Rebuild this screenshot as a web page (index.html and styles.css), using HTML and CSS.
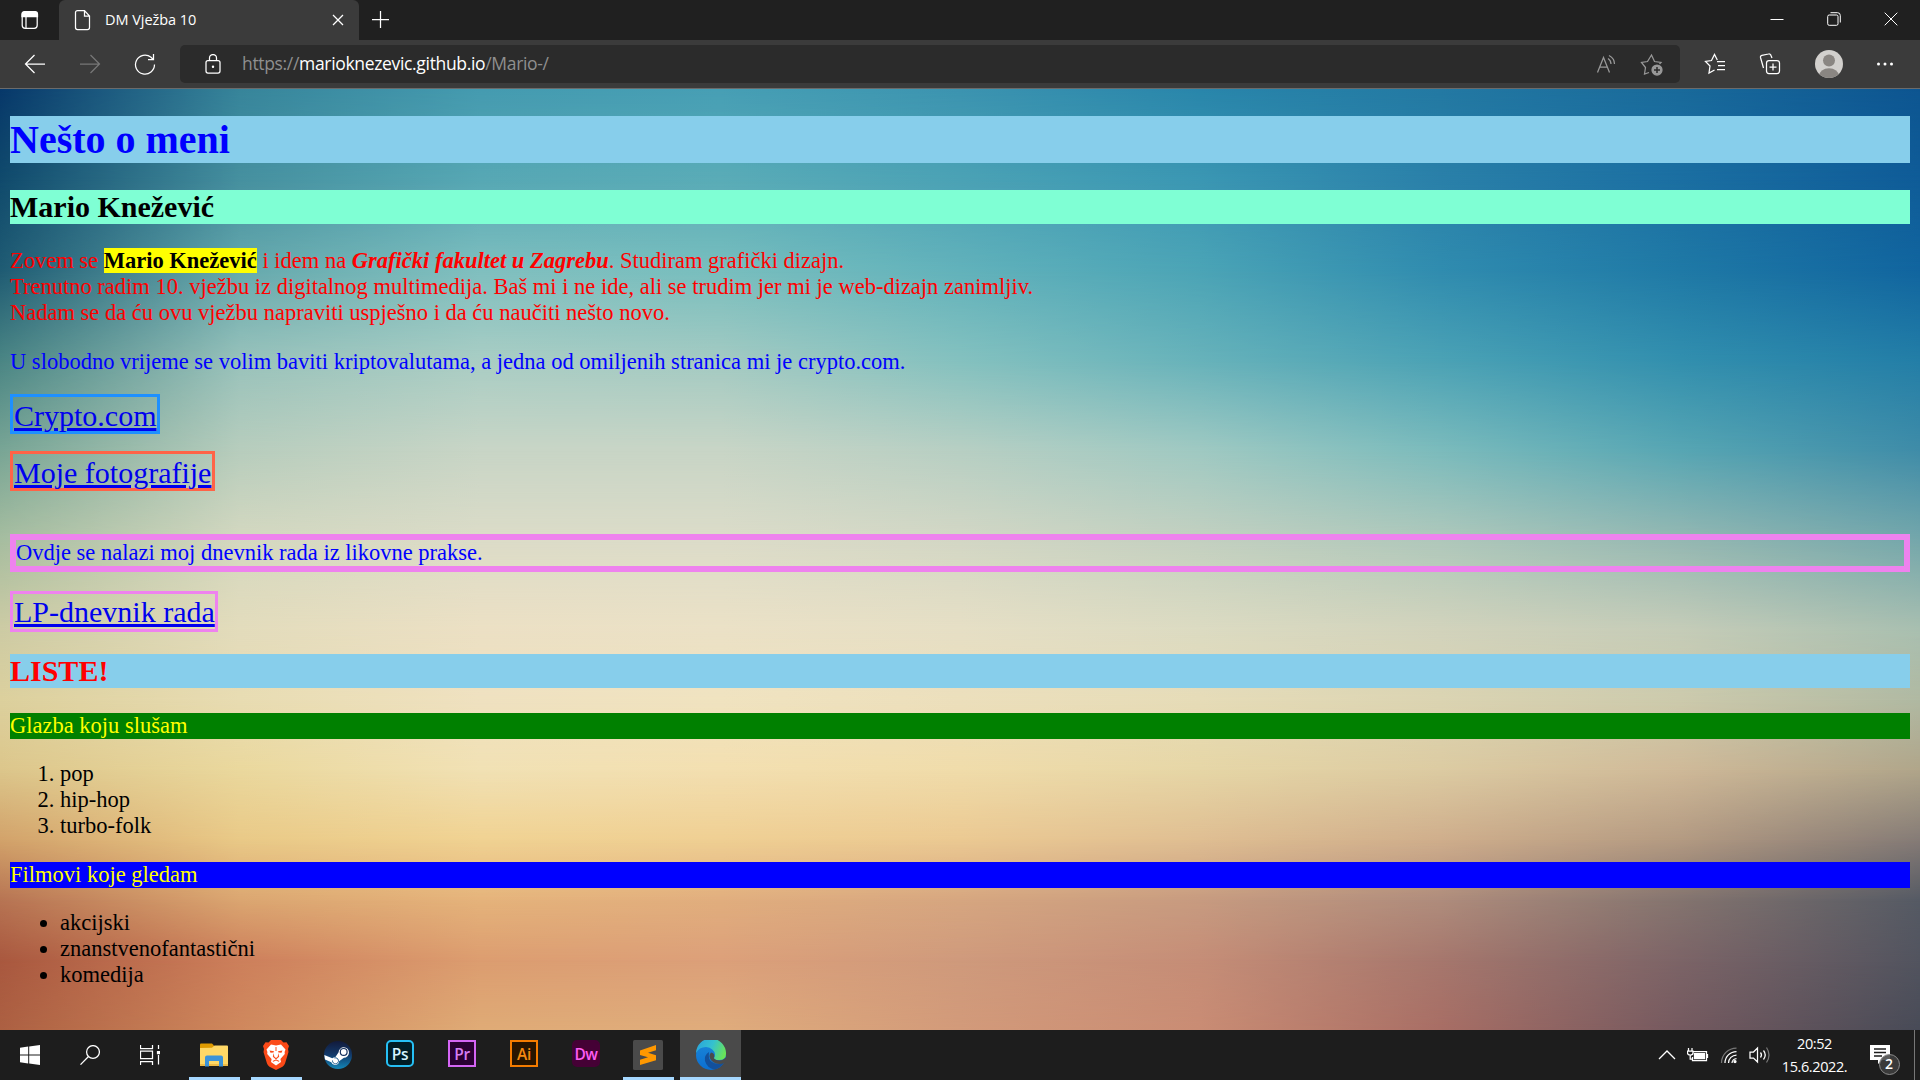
FILE: index.html
```html
<!DOCTYPE html>
<html lang="hr">
<head>
<meta charset="utf-8">
<title>DM Vježba 10</title>
<link rel="stylesheet" href="styles.css">
</head>
<body>
<header class="tabs">
  <div class="tab-actions"><svg class="ico" width="20" height="20" viewBox="0 0 20 20"><rect x="2.200" y="2" width="15" height="16.300" rx="3"/><path class="solid" d="M2 6.500V4a2.500 2.500 0 0 1 2.500-2.500h10.500A2.500 2.500 0 0 1 17.500 4v2.500z"/><path d="M6 6v12"/></svg></div>
  <div class="tab">
    <svg class="ico" width="18" height="22" viewBox="0 0 18 22"><path d="M3.500 1.500h7l5 5.500v11.500a2 2 0 0 1-2 2h-10a2 2 0 0 1-2-2v-15a2 2 0 0 1 2-2zM10.500 1.500V7h5"/></svg>
    <span class="tab-title">DM Vježba 10</span>
    <svg class="ico" width="12" height="12" viewBox="0 0 12 12"><path d="M1 1l10 10M11 1L1 11"/></svg>
  </div>
  <div class="new-tab"><svg class="ico" width="18" height="18" viewBox="0 0 18 18"><path d="M8.500 0v17M0 8.500h17"/></svg></div>
  <div class="window-controls">
    <svg class="ico thin" width="14" height="14" viewBox="0 0 14 14"><path d="M.5 7.500h13"/></svg>
    <svg class="ico thin" width="14" height="14" viewBox="0 0 14 14"><rect x=".7" y="3" width="10.300" height="10.300" rx="1.500"/><path d="M3.500.7h7a2.800 2.800 0 0 1 2.800 2.800v7"/></svg>
    <svg class="ico thin" width="14" height="14" viewBox="0 0 14 14"><path d="M.7.7l12.600 12.600M13.300.7L.7 13.300"/></svg>
  </div>
</header>
<nav class="toolbar">
  <div class="nav-buttons">
    <svg class="ico" width="22" height="20" viewBox="0 0 22 20"><path d="M10.500 1L1.500 10l9 9M1.500 10H21"/></svg>
    <svg class="ico dim" width="22" height="20" viewBox="0 0 22 20"><path d="M11.500 1l9 9-9 9M20.500 10H1"/></svg>
    <svg class="ico" width="22" height="22" viewBox="0 0 22 22"><path d="M20.500 11.500A9.500 9.500 0 1 1 17 4.200l2 2M19.500 1v5.500H14"/></svg>
  </div>
  <div class="address">
    <svg class="ico" width="16" height="20" viewBox="0 0 16 20"><rect x="1" y="6.500" width="14" height="12.500" rx="2"/><path d="M4.500 6.500V4a3.500 3.500 0 0 1 7 0v2.500"/><circle class="solid" cx="8" cy="12.700" r=".6"/></svg>
    <span class="url">https://<b>marioknezevic.github.io</b>/Mario-/</span>
    <svg class="ico grey" width="20" height="20" viewBox="0 0 20 20"><path d="M1.500 18.500l6-15 6 15M3.700 13h7.600M12 4.500c2 1.300 3 3 3 5.500M13 1.500c3.300 1.700 5.500 4.500 5.500 8.500"/></svg>
    <svg class="ico grey" width="24" height="24" viewBox="0 0 24 24"><path d="M9 20.500l-4.500 1.500 1-6.500L1.500 10.500l6-1L11.500 3l3 6.500 6.500 1-1.500 1.500"/><circle class="solid" cx="17" cy="18" r="5"/><path class="cut" d="M17 15v6M14 18h6"/></svg>
  </div>
  <div class="tools">
    <svg class="ico" width="22" height="22" viewBox="0 0 22 22"><path d="M10.500 17l-5.500 3 1-7L1.500 8.500l6-1 3-6 2.800 5.500M13 8.500h8M14 12.500h7M13 16.500h8"/></svg>
    <svg class="ico" width="22" height="22" viewBox="0 0 22 22"><path d="M4.500 15l-3-10.500a1.800 1.800 0 0 1 1.300-2.200L9.500 1a2 2 0 0 1 2.500 1.500L13 5"/><rect x="7.500" y="7.500" width="13" height="13" rx="2.500"/><path d="M14 10.500v7M10.500 14h7"/></svg>
    <svg width="28" height="28" viewBox="0 0 28 28"><defs><clipPath id="face"><circle cx="14" cy="14" r="14"/></clipPath></defs><g clip-path="url(#face)"><path fill="#d2d0cd" d="M0 0h28v28H0z"/><circle cx="14" cy="10.500" r="6" fill="#8a8682"/><ellipse cx="14" cy="26" rx="10" ry="7.800" fill="#8a8682"/></g></svg>
    <svg width="18" height="6" viewBox="0 0 18 6" fill="#fff"><circle cx="2.500" cy="3" r="1.500"/><circle cx="9" cy="3" r="1.500"/><circle cx="15.500" cy="3" r="1.500"/></svg>
  </div>
</nav>

<div class="viewport">
  <div class="sky s0"></div><div class="sky s1"></div><div class="sky s2"></div><div class="sky s3"></div><div class="sky s4"></div><div class="sky s5"></div><div class="sky s6"></div><div class="sky s7"></div><div class="sky s8"></div><div class="sky s9"></div><div class="sky s10"></div><div class="sky s11"></div><div class="sky s12"></div>
  <main class="page">
    <h1>Nešto o meni</h1>
    <h2 class="name">Mario Knežević</h2>
    <p class="intro">Zovem se <mark>Mario Knežević</mark> i idem na <strong><em>Grafički fakultet u Zagrebu</em></strong>. Studiram grafički dizajn.<br>Trenutno radim 10. vježbu iz digitalnog multimedija. Baš mi i ne ide, ali se trudim jer mi je web-dizajn zanimljiv.<br>Nadam se da ću ovu vježbu napraviti uspješno i da ću naučiti nešto novo.</p>
    <p class="hobby">U slobodno vrijeme se volim baviti kriptovalutama, a jedna od omiljenih stranica mi je crypto.com.</p>
    <a class="link crypto" href="#">Crypto.com</a>
    <a class="link photos" href="#">Moje fotografije</a>
    <p class="diary">Ovdje se nalazi moj dnevnik rada iz likovne prakse.</p>
    <a class="link lp" href="#">LP-dnevnik rada</a>
    <h2 class="lists">LISTE!</h2>
    <p class="music">Glazba koju slušam</p>
    <ol><li>pop</li><li>hip-hop</li><li>turbo-folk</li></ol>
    <p class="films">Filmovi koje gledam</p>
    <ul><li>akcijski</li><li>znanstvenofantastični</li><li>komedija</li></ul>
  </main>
</div>

<footer class="taskbar">
  <div class="sys"><svg width="20" height="20" viewBox="0 0 20 20" fill="#fff"><path d="M0 2.800l8.200-1.200v7.900H0zM9.200 1.400L20 0v9.500H9.200zM0 10.500h8.200v7.900L0 17.200zM9.200 10.500H20V20L9.200 18.600z"/></svg></div>
  <div class="sys"><svg class="ico" width="20" height="20" viewBox="0 0 20 20"><circle cx="13" cy="7" r="6.400"/><path d="M8.500 11.500L.5 19.600"/></svg></div>
  <div class="sys"><svg class="ico" width="20" height="20" viewBox="0 0 20 20"><path d="M.5 0v3.500h12V0M.5 20v-3.500h12V20M.5 6h12v7.500H.5zM18.500 0v4M18.500 10v9.500"/><path class="solid" d="M17.500 6.500h2v2h-2z"/></svg></div>
  <div class="apps">
    <div class="app open"><svg width="28" height="24" viewBox="0 0 28 24"><path fill="#e09b00" d="M0 1.500Q0 .5 1 .5h11l2 2v4H0z"/><path fill="#ffd866" d="M0 5l12-.3 2.500-2.200H27q1 0 1 1V23H0z"/><path fill="#efbb45" d="M0 21h28v2H0z"/><path fill="#3c93d8" d="M5 23.500v-9a2 2 0 0 1 2-2h14a2 2 0 0 1 2 2v9h-4v-5.500H9v5.500z"/></svg></div>
    <div class="app open"><svg width="26" height="30" viewBox="0 0 26 30"><path fill="#fb4a18" d="M13 0h5l2.500 2.500 3-.3L26 6l-1 3 .5 3-3.500 11.500q-.7 2-2.500 3.200L13 30l-6.500-3.300Q4.700 25.500 4 23.500L.5 12 1 9 0 6l2.500-3.800 3 .3L8 0z"/><path fill="#fff" d="M8 4.500l5 1 5-1 4.500 5-.9 2.500.2 2-4.400 5 .6 3L13 25.500 8 22l.6-3-4.400-5 .2-2-.9-2.500z"/><path fill="#fb4a18" d="M6.500 10.500l4.500.8-.5 1.200-3 .3zM19.500 10.500l-4.500.8.500 1.200 3 .3zM10.800 13l.4 3.500L13 18l1.800-1.500.4-3.500 1 3.800L13 19.500l-3.200-2.700zM9.500 21l3.500-1.500 3.500 1.500-.8.800-2.700-1.200-2.700 1.200zM12.500 7h1v4h-1z"/></svg></div>
    <div class="app"><svg width="28" height="28" viewBox="0 0 28 28"><defs><linearGradient id="st" x2="0" y2="1"><stop stop-color="#121a3a"/><stop offset=".5" stop-color="#123a6b"/><stop offset="1" stop-color="#1387b8"/></linearGradient></defs><circle cx="14" cy="14" r="14" fill="url(#st)"/><path fill="#fff" d="M.3 14l8 3.200q1.500-1 3-.9l3.300-5a5.200 5.200 0 1 1 5.300 5.400l-4.800 3.500a4 4 0 0 1-7.800 1L1 18.400z"/><circle cx="19.700" cy="10.900" r="3.400" fill="none" stroke="#16315e" stroke-width="1.200"/><path d="M8.500 19.500a3 3 0 1 0 2-2.500" fill="none" stroke="#1a5a8e"/></svg></div>
    <div class="app"><span class="adobe ps">Ps</span></div>
    <div class="app"><span class="adobe pr">Pr</span></div>
    <div class="app"><span class="adobe ai">Ai</span></div>
    <div class="app"><span class="adobe dw">Dw</span></div>
    <div class="app open"><svg width="30" height="30" viewBox="0 0 30 30"><rect width="30" height="30" rx="1.500" fill="#4a4a4a"/><path fill="#ff9800" d="M7 10.500L23 5v5.200l-8 2.600 8 2.400v5L7 25v-5.200l8-2.600-8-2.200z"/></svg></div>
    <div class="app open active"><svg width="30" height="30" viewBox="0 0 30 30"><defs><linearGradient id="e1" x1="0" y1=".3" x2="1" y2=".6"><stop stop-color="#2aa5dc"/><stop offset=".5" stop-color="#35c1cf"/><stop offset="1" stop-color="#6be454"/></linearGradient><linearGradient id="e2" x2="0" y2="1"><stop stop-color="#1b87d9"/><stop offset="1" stop-color="#0b6fd0"/></linearGradient></defs><circle cx="15" cy="15" r="15" fill="url(#e2)"/><path fill="url(#e1)" d="M0 13A15 15 0 0 1 30 14q0 6-7 6-5 0-5-2 1-1.500 1-3.500Q18 8 10 7 3 7 0 13z"/><path fill="#12509c" d="M13 12q-5 3-4 9 2 7 9.500 8.600Q25 28 28.300 22q-4 2.500-9 1.500-6.500-2-6.500-7.500 0-2.500.2-4z"/><path fill="#4a4a4a" d="M15 12.500q3.500.5 3.300 4-.8 1.500-.3 2 1.500 2 5.500 2 3.500 0 6.500-3v5l-2 .5q-3.500 1.500-8 .5-5.500-2-6.500-7 0-2.500 1.500-4z"/></svg></div>
  </div>
  <div class="tray">
    <svg class="ico" width="18" height="10" viewBox="0 0 18 10"><path d="M1 9l8-8 8 8"/></svg>
    <svg class="ico" width="22" height="16" viewBox="0 0 22 16"><path d="M6 4.500h13.500v9h-14V10M20.500 7v4M1.500 1v3M5 1v3M.5 4h5.500v2q0 2-2.700 2Q.5 8 .5 6zM3.200 8v4H5"/><path class="solid" d="M7.500 6.500h10v5h-10z"/></svg>
    <svg class="ico" width="18" height="18" viewBox="0 0 18 18"><path class="faint" d="M1.500 17A15 15 0 0 1 16.500 2"/><path d="M5 17A11.500 11.500 0 0 1 16.500 5.500M8.500 17a8 8 0 0 1 8-8M12 17a4.500 4.500 0 0 1 4.500-4.500"/><circle class="solid" cx="15" cy="15.500" r="1"/></svg>
    <svg class="ico" width="22" height="18" viewBox="0 0 22 18"><path d="M1 6h3.500L8.500 2v14l-4-4H1zM11.500 6.500q2 2.500 0 5M14.500 4.500q3.500 4.500 0 9"/><path class="faint" d="M17.500 1.500q5 7.500 0 15"/></svg>
  </div>
  <div class="clock"><span>20:52</span><span>15.6.2022.</span></div>
  <div class="notify">
    <svg width="40" height="34" viewBox="0 0 40 34"><path fill="#fff" d="M3 3h20v15h-7.500L11 22v-4H3z"/><path stroke="#1d1d1d" stroke-width="1.300" d="M7 7h12M7 10.500h12M7 14h8"/><circle cx="22.500" cy="22.500" r="10" fill="#3f3f3f" fill-opacity=".85" stroke="#8b8b8b"/></svg>
    <span class="badge">2</span>
  </div>
</footer>
</body>
</html>
```

FILE: styles.css
```css
* { box-sizing: border-box; }
body { margin: 0; width: 1920px; height: 1080px; overflow: hidden; display: flex; flex-direction: column; background: #202020; font-family: "Open Sans", "Noto Sans", sans-serif; color: #fff; }
svg { display: block; flex: none; }
.ico { fill: none; stroke: #fff; stroke-width: 1.25; }
.thin { stroke-width: 1; }
.ico .solid { fill: #fff; }
.dim { stroke: #777; }
.grey { stroke: #999; }
.grey .solid { fill: #999; }
.grey .cut { stroke: #2b2b2b; stroke-width: 1.5; }
.faint { stroke: #777; }

.tabs { height: 40px; display: flex; align-items: stretch; background: #202020; }
.tab-actions { width: 59px; padding: 10px 0 0 20px; }
.tab { width: 300px; display: flex; align-items: center; padding: 0 15px; background: #3b3b3b; border-radius: 6px 6px 0 0; }
.tab-title { flex: 1; margin-left: 13px; font-size: 14.500px; letter-spacing: -.05px; line-height: 20px; }
.new-tab { padding: 11px 13px; }
.window-controls { margin-left: auto; display: flex; gap: 43px; padding: 12px 22px 0 0; }

.toolbar { height: 49px; display: flex; align-items: center; background: #3b3b3b; border-bottom: 1px solid #6b6b6b; }
.nav-buttons { width: 180px; display: flex; gap: 33px; align-items: center; padding: 0 0 1px 24px; }
.address { width: 1500px; height: 38px; display: flex; align-items: center; padding: 0 16px 0 25px; background: #2b2b2b; border-radius: 5px; }
.url { flex: 1; margin-left: 21px; padding-bottom: 2px; font-size: 17.500px; letter-spacing: -.33px; color: #8f8f8f; }
.url b { font-weight: 400; color: #fff; }
.address .grey + .grey { margin-left: 24px; }
.tools { flex: 1; display: flex; align-items: center; justify-content: space-between; padding: 0 26px 0 24px; }

.viewport { height: 941px; display: grid; }
.sky, .page { grid-area: 1 / 1; }
.s0 { background: linear-gradient(90deg, #07386a, #37859b, #459bb0, #479fb5, #3c94b0, #2986ab, #2379a3, #196a9b, #0d5591); }
.s1 { background: linear-gradient(90deg, #104a6c, #46909f, #57a8b4, #5aacb7, #4ba2b5, #3b97b3, #2a80a9, #1b6fa2, #0f5c98); mask-image: linear-gradient(transparent 0, #000 91px); }
.s2 { background: linear-gradient(90deg, #1f5b73, #66a9ad, #7fbfbf, #78bebe, #62b2bb, #4ba4b6, #308caf, #1f79a6, #11659f); mask-image: linear-gradient(transparent 91px, #000 181px); }
.s3 { background: linear-gradient(90deg, #4a8584, #98c2bb, #a9cdc4, #a3cac2, #84c1bf, #67b2ba, #4ba2b5, #328fae, #237ea7); mask-image: linear-gradient(transparent 181px, #000 271px); }
.s4 { background: linear-gradient(90deg, #78a595, #b7cdbd, #c8d5c6, #c8d5c6, #b7cfc3, #9fc9c2, #7bbbbc, #57a6b3, #3f8ca8); mask-image: linear-gradient(transparent 271px, #000 361px); }
.s5 { background: linear-gradient(90deg, #a6bda0, #d4d8c0, #dcdcc8, #dcdcc9, #d3d7c5, #c3d0c0, #afc8bb, #95b8b2, #74a7ab); mask-image: linear-gradient(transparent 361px, #000 451px); }
.s6 { background: linear-gradient(90deg, #cdcba4, #e3dcbc, #ece0c4, #ebe1c6, #e6dfc5, #dcdbc2, #d2d3bc, #c5ccb8, #a9bfb0); mask-image: linear-gradient(transparent 451px, #000 541px); }
.s7 { background: linear-gradient(90deg, #dcd09d, #e8dcb2, #efe1c0, #f0e3c0, #ecdfbc, #e6dcb8, #dbd4b2, #cccaac, #b0b9a2); mask-image: linear-gradient(transparent 541px, #000 611px); }
.s8 { background: linear-gradient(90deg, #dcc68b, #ead89d, #f1e1b4, #f3dfb0, #f0dcaa, #e6d6a6, #dccba2, #cfb998, #b0a58a); mask-image: linear-gradient(transparent 611px, #000 681px); }
.s9 { background: linear-gradient(90deg, #d2a26a, #e9c987, #f0d292, #efcf93, #ebc992, #dfbe92, #cfae8c, #b39a82, #857b76); mask-image: linear-gradient(transparent 681px, #000 751px); }
.s10 { background: linear-gradient(90deg, #b77453, #dba671, #e5b37b, #e1ae7e, #d6a680, #c79b80, #af8c7c, #84746f, #555a64); mask-image: linear-gradient(transparent 751px, #000 811px); }
.s11 { background: linear-gradient(90deg, #a9583f, #cd7f5b, #dc9d70, #dca07a, #cf9a7c, #c58d77, #a6776d, #7c6467, #52545f); mask-image: linear-gradient(transparent 811px, #000 871px); }
.s12 { background: linear-gradient(90deg, #ac6042, #cf885d, #dfab76, #dfac7c, #d29a7a, #c98c74, #a86e65, #74595f, #484b57); mask-image: linear-gradient(transparent 871px, #000 941px); }

.page { z-index: 1; display: flex; flex-direction: column; padding: 27px 10px 0; font: 22.5px/26px "Liberation Serif", serif; color: #000; }
.page h1, .page h2, .page p, .page ol, .page ul { margin: 0; }
.page h1 { background: skyblue; color: blue; font-size: 40px; line-height: 47px; }
.page h2 { font-size: 30px; line-height: 34px; }
.page .name { margin-top: 27px; background: aquamarine; }
.page .intro { margin-top: 24px; color: red; }
.page mark { background: yellow; color: #000; font-weight: 700; }
.page .hobby { margin-top: 23px; color: blue; }
.link { align-self: flex-start; border: 3px solid; padding: 1px 0 0 1px; font-size: 30px; line-height: 34px; color: #00e; text-decoration-thickness: 3px; }
.crypto { margin-top: 19px; height: 40px; line-height: 35px; border-color: dodgerblue; }
.photos { margin-top: 17px; height: 40px; line-height: 35px; padding-right: 1px; border-color: tomato; }
.page .diary { margin-top: 43px; border: 6px solid violet; color: blue; }
.lp { margin-top: 19px; border-color: violet; }
.page .lists { margin-top: 22px; background: skyblue; color: red; }
.page .music { margin-top: 25px; background: green; color: yellow; }
.page .films { margin-top: 23px; background: blue; color: yellow; }
.page ol { margin-top: 22px; padding-left: 50px; }
.page ul { margin-top: 22px; padding-left: 50px; }

.taskbar { height: 50px; display: flex; background: #1d1d1d; }
.sys { width: 60px; display: flex; align-items: center; justify-content: center; }
.apps { display: flex; padding-left: 3px; }
.app { width: 62px; display: flex; flex-direction: column; align-items: center; justify-content: center; border: solid transparent; border-width: 0 5px 3px; padding-top: 3px; }
.open { background: linear-gradient(#a6d8ff, #a6d8ff) bottom / 51px 3px no-repeat border-box; }
.active { border-width: 0; padding: 0; margin-left: 1px; width: 61px; background: linear-gradient(#a6d8ff, #a6d8ff) bottom / 100% 3px no-repeat #4a4a4a; }
.adobe { width: 28px; height: 27px; border: 2px solid; display: flex; align-items: center; justify-content: center; font-size: 15.500px; font-weight: 600; letter-spacing: -.4px; line-height: 20px; margin-bottom: 3px; }
.ps { background: #001d26; border-color: #26c0f5; border-radius: 5px; color: #d5f4ff; }
.pr { background: #2a0033; border-color: #d565f5; color: #d77df5; }
.ai { background: #281500; border-color: #f57c00; color: #f58a10; }
.dw { background: #450135; border-color: #450135; border-radius: 5px; color: #ff5cf4; }
.tray { margin-left: auto; display: flex; align-items: center; gap: 11px; }
.clock { width: 87px; display: flex; flex-direction: column; align-items: center; font-size: 14.500px; line-height: 23px; letter-spacing: -.4px; padding-top: 2px; }
.notify { width: 57px; height: 50px; display: grid; padding: 12px 0 0 9px; border-right: 1px solid #777; margin-right: 5px; }
.notify svg, .badge { grid-area: 1 / 1; }
.badge { width: 20px; margin: 12px 0 0 12px; text-align: center; font-size: 14px; line-height: 20px; font-weight: 600; }
```
